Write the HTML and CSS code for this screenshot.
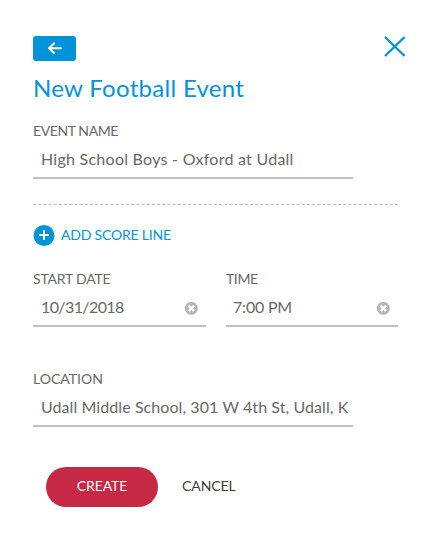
FILE: index.html
```
<!DOCTYPE html>
<html lang="en">
<head>
<meta charset="utf-8">
<title>New Football Event</title>
<link rel="stylesheet" href="styles.css">
</head>
<body>
<main class="panel">
  <header class="top">
    <button class="back" aria-label="Back"><svg width="16" height="14" viewBox="0 0 16 14"><path d="M13.8 6.2H2.6M7 1.4L2 6.2l5 4.8" fill="none" stroke="currentColor" stroke-width="2.1" stroke-linecap="round" stroke-linejoin="round"/></svg></button>
    <button class="close" aria-label="Close"><svg width="22" height="22" viewBox="0 0 22 22"><path d="M1 1l19.6 19M20.6 1L1 20" fill="none" stroke="currentColor" stroke-width="2.3"/></svg></button>
  </header>
  <h1 class="title"><span class="t-title">New Football Event</span></h1>
  <section class="field wide">
    <div class="label"><span class="t-event">EVENT NAME</span></div>
    <div class="value"><span class="t-name">High School Boys - Oxford at Udall</span></div>
  </section>
  <svg class="divider" width="365" height="1"><path d="M0 .5H365" stroke="#bdbdbd" stroke-dasharray="3 2.17"/></svg>
  <button class="add">
    <svg width="22" height="22" viewBox="0 0 22 22"><circle cx="11" cy="10.5" r="10.5" fill="currentColor"/><path d="M6 10h10M11 5v10" stroke="#fff" stroke-width="2"/></svg>
    <span class="t-add">ADD SCORE LINE</span>
  </button>
  <div class="row">
    <section class="field">
      <div class="label"><span class="t-start">START DATE</span></div>
      <div class="value"><span class="t-date">10/31/2018</span><svg class="clear" width="14" height="14" viewBox="0 0 14 14"><circle cx="7.3" cy="7.3" r="6.5" fill="#b5b5b5"/><path d="M4.6 4.6l5.4 5.4M10 4.6L4.6 10" stroke="#fff" stroke-width="2.3"/></svg></div>
    </section>
    <section class="field">
      <div class="label"><span class="t-time">TIME</span></div>
      <div class="value"><span class="t-hour">7:00 PM</span><svg class="clear" width="14" height="14" viewBox="0 0 14 14"><circle cx="7.3" cy="7.3" r="6.5" fill="#b5b5b5"/><path d="M4.6 4.6l5.4 5.4M10 4.6L4.6 10" stroke="#fff" stroke-width="2.3"/></svg></div>
    </section>
  </div>
  <section class="field wide location">
    <div class="label"><span class="t-loc">LOCATION</span></div>
    <div class="value"><span class="t-addr">Udall Middle School, 301 W 4th St, Udall, K</span></div>
  </section>
  <footer class="actions">
    <button class="create"><span class="t-create">CREATE</span></button>
    <button class="cancel"><span class="t-cancel">CANCEL</span></button>
  </footer>
</main>
</body>
</html>
```
FILE: styles.css
```
* { box-sizing: border-box; }
body { margin: 0; background: #fff; color: #686868; font-family: Lato, "Open Sans", sans-serif; }
button { border: 0; padding: 0; background: none; color: inherit; font: inherit; }
svg { display: block; flex: none; }
.panel { width: 432px; height: 537px; padding: 36px 26px 0 33px; }
.top { display: flex; justify-content: space-between; height: 25px; }
.back { display: flex; align-items: center; justify-content: center; width: 43px; height: 25px; border-radius: 3px; background: #0093da; color: #fff; }
.close { width: 22px; height: 22px; color: #0093da; }
.title { margin: 12px 0 0; height: 31px; font-size: 24px; line-height: 30px; font-weight: 400; color: #0093da; white-space: nowrap; }
.field { display: flex; flex-direction: column; height: 56px; border-bottom: 2px solid #c0c0c0; white-space: nowrap; }
.wide { width: 320px; margin-top: 19px; }
.label { height: 16px; font-size: 14px; line-height: 16px; }
.value { display: flex; align-items: center; justify-content: space-between; flex: 1; padding: 1px 8px 0; font-size: 16px; line-height: 20px; }
.clear { margin-top: 2px; }
.divider { margin-top: 25px; }
.add { display: flex; align-items: center; gap: 6px; height: 22px; margin-top: 20px; color: #0093da; font-size: 14px; line-height: 16px; white-space: nowrap; }
.row { display: grid; grid-template-columns: 173px 172px; column-gap: 20px; margin-top: 24px; }
.location { margin-top: 44px; }
.actions { display: flex; gap: 24px; margin: 40px 0 0 13px; font-size: 14px; }
.create, .cancel { height: 40px; padding-bottom: 3px; }
.create { width: 112px; border-radius: 20px; background: #c62943; color: #fff; }
.cancel { color: #3b3b3b; }
.t-title { letter-spacing: .3px; }
.t-event { letter-spacing: -.4px; }
.t-name { letter-spacing: .26px; }
.t-add { letter-spacing: -.2px; padding-bottom: 2px; }
.t-start { letter-spacing: -.2px; }
.t-time { letter-spacing: -.4px; }
.t-date { letter-spacing: -.6px; }
.t-hour { letter-spacing: -.2px; margin-left: -1px; }
.t-addr { letter-spacing: .08px; }
.t-create, .t-cancel { letter-spacing: -.08px; }
```
